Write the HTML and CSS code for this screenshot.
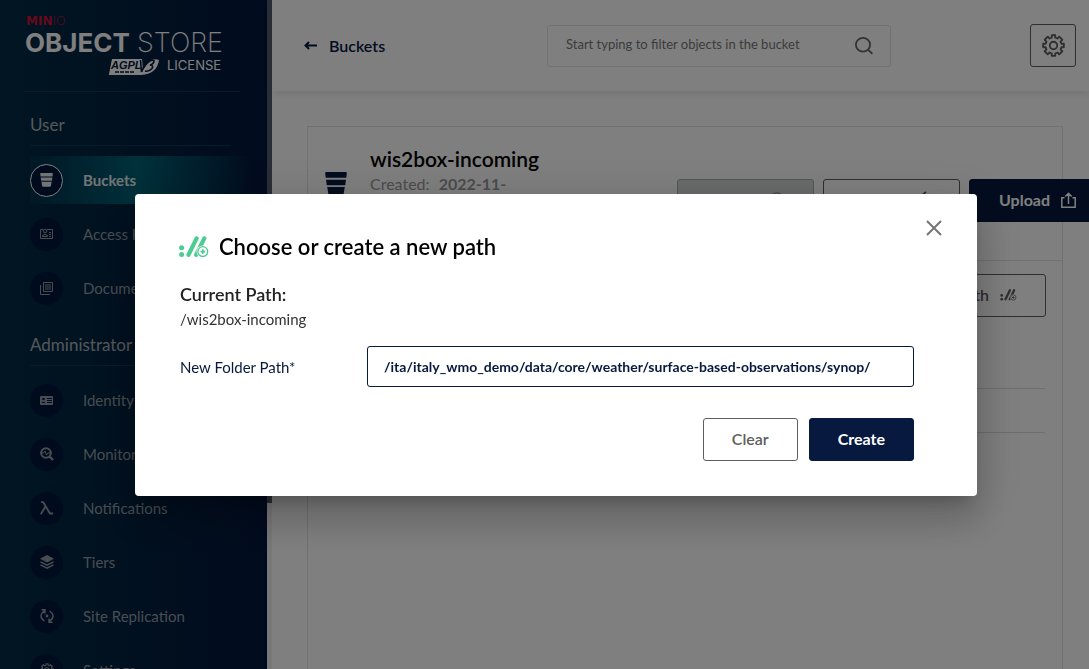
FILE: index.html
```html
<!DOCTYPE html>
<html lang="en">
<head>
<meta charset="utf-8">
<title>MinIO Console</title>
<link rel="stylesheet" href="styles.css">
</head>
<body>
<svg class="defs" aria-hidden="true">
  <symbol id="path-icon" viewBox="0 0 30 22">
    <g fill="currentColor"><circle cx="2.6" cy="11.8" r="2.5"/><circle cx="2.6" cy="18.6" r="2.5"/></g>
    <path d="M9.5 18.8 17.6 2.4M17.2 18.8 25.3 2.4" stroke="currentColor" stroke-width="4.2" stroke-linecap="round" fill="none"/>
    <circle class="badge" cx="23.8" cy="15.6" r="6.2"/>
    <circle cx="23.8" cy="15.6" r="4.9" fill="none" stroke="currentColor" stroke-width="1.3"/>
    <path d="M23.8 13.3v4.6M21.5 15.6h4.6" stroke="currentColor" stroke-width="1.6"/>
  </symbol>
  <symbol id="bucket-icon" viewBox="0 0 22 24">
    <path fill="currentColor" d="M1.2 0h19.6q1.2 0 1 1.2L21.300 5.800H.7L.2 1.200Q0 0 1.200 0zM1 7.800h20l-.8 5.400H1.800zM2.200 15h17.600L18.600 22q-.2 1.600-1.600 1.600H5q-1.400 0-1.600-1.600z"/>
  </symbol>
  <symbol id="gear-icon" viewBox="0 0 24 24">
    <path fill="none" stroke="currentColor" stroke-width="1.900" stroke-linejoin="round" d="M10.200 1.200h3.600v2.600q1.300.3 2.300.9l1.900-1.900 3.200 3.200-1.900 1.900q.6 1 .9 2.300h2.600v3.600h-2.600q-.3 1.300-.9 2.300l1.900 1.900-3.200 3.200-1.900-1.900q-1 .6-2.300.9v2.600h-3.600v-2.600q-1.300-.3-2.300-.9L6 21.200 2.800 18l1.900-1.900q-.6-1-.9-2.300H1.200v-3.600h2.600q.3-1.300.9-2.300L2.800 6 6 2.800l1.900 1.900q1-.6 2.300-.9z"/>
    <circle cx="12" cy="12" r="3.900" fill="none" stroke="currentColor" stroke-width="1.900"/>
  </symbol>
</svg>

<div class="app">
  <aside class="sidebar">
    <div class="menu">
      <div class="brand">
        <svg class="logo" viewBox="0 0 200 62" role="img" aria-label="MinIO Object Store, AGPL v3 License">
          <text class="logo-min" x="0" y="11">MIN<tspan class="logo-io">IO</tspan></text>
          <text class="logo-object" x="-1" y="38">OBJECT</text>
          <text class="logo-store" x="111" y="38">STORE</text>
          <path fill="#fff" d="M86 45h30l1 11 6-9q5-3 10-1-2 14-18 15H82.800z"/>
          <text class="logo-agpl" x="85" y="55">AGPL</text>
          <path d="M114.500 46l1 12q3-8 9-11.500M120 49q4-3.500 8-2.500 0 3.500-4 4.500 4 .5 2 3.500-3 3.500-7 2.500" fill="none" stroke="#04193a" stroke-width="1.600"/>
          <path d="M89 58h19" stroke="#04193a" stroke-width="1.400" stroke-dasharray="4 1"/>
          <text class="logo-license" x="141" y="56">LICENSE</text>
        </svg>
      </div>
      <nav>
        <h2>User</h2>
        <ul>
          <li><a class="active" href="#"><span class="dot"><svg width="13" height="14"><use href="#bucket-icon"/></svg></span>Buckets</a></li>
          <li><a href="#"><span class="dot"><svg width="13" height="12" viewBox="0 0 13 12" fill="none" stroke="currentColor"><path d="M3 1.500H.5v9h12v-9H7"/><circle cx="5" cy="3" r="1.800"/><path d="M2.500 8.500q0-2 2.500-2t2.500 2zM9 4.500h2M9 6.500h2M9 8.500h2"/></svg></span>Access Keys</a></li>
          <li><a href="#"><span class="dot"><svg width="13" height="13" viewBox="0 0 13 13" fill="none" stroke="currentColor"><path d="M3.500.5h9v9h-9zM.5 3v9.500H10M5 3h6M5 5h6M5 7h6"/></svg></span>Documentation</a></li>
        </ul>
        <h2>Administrator</h2>
        <ul>
          <li><a href="#"><span class="dot"><svg width="13" height="9" viewBox="0 0 13 9"><rect width="13" height="9" rx="1" fill="currentColor"/><g class="cut"><circle cx="3.500" cy="3" r="1.300"/><path d="M1.500 7q2-2.500 4 0zM7 2h5v1H7zM7 4h5v1H7zM7 6h5v1H7z"/></g></svg></span>Identity</a></li>
          <li><a href="#"><span class="dot"><svg width="14" height="14" viewBox="0 0 14 14" fill="none" stroke="currentColor"><circle cx="6" cy="6" r="4.800" stroke-width="2"/><path d="M9.500 9.500 13 13" stroke-width="2.400"/><path d="M0 6h3.500L5 4l1.500 4L8 6h4"/></svg></span>Monitoring</a></li>
          <li><a href="#"><span class="dot"><svg width="13" height="14" viewBox="0 0 13 14" fill="none" stroke="currentColor" stroke-width="1.800"><path d="M1 1.200h2.200L10 12.500h3M5.500 5.500.8 13.200"/></svg></span>Notifications</a></li>
          <li><a href="#"><span class="dot"><svg width="14" height="14" viewBox="0 0 14 14"><path fill="currentColor" d="M7 0l7 3.700-7 3.700-7-3.700z"/><path d="M.5 6.800 7 10.200l6.500-3.400M.5 9.800 7 13.200l6.500-3.400" fill="none" stroke="currentColor" stroke-width="1.400"/></svg></span>Tiers</a></li>
          <li><a href="#"><span class="dot"><svg width="14" height="14" viewBox="0 0 14 14" fill="none" stroke="currentColor" stroke-width="1.400"><path d="M4.500 12Q1 10 1 7t3.500-5.200M1.500.8h3.500v3.700M9.500 2Q13 4 13 7t-3.500 5.200M12.500 13.200H9V9.500"/><circle cx="7" cy="7" r=".7"/></svg></span>Site Replication</a></li>
          <li><a href="#"><span class="dot"><svg width="14" height="14"><use href="#gear-icon"/></svg></span>Settings</a></li>
        </ul>
      </nav>
    </div>
    <div class="scroll"><div class="thumb"></div></div>
  </aside>

  <main>
    <header class="topbar">
      <a class="back" href="#"><svg width="13" height="9" viewBox="0 0 13 9"><path d="M13 4.500H2M5 1 1.500 4.500 5 8" fill="none" stroke="currentColor" stroke-width="2"/></svg>Buckets</a>
      <label class="search">
        <input type="text" aria-label="Filter objects" placeholder="Start typing to filter objects in the bucket">
        <svg width="18" height="18" viewBox="0 0 18 18" fill="none" stroke="currentColor" stroke-width="1.800"><ellipse cx="8" cy="7.800" rx="7.100" ry="6.900"/><path d="M12.800 12.500 17.400 16.800"/></svg>
      </label>
      <button class="btn gear" type="button" aria-label="Settings"><svg width="23" height="23"><use href="#gear-icon"/></svg></button>
    </header>

    <section class="browser">
      <div class="heading">
        <svg class="bucket" width="22" height="24"><use href="#bucket-icon"/></svg>
        <div class="info">
          <h1>wis2box-incoming</h1>
          <p>Created: <b>2022-11-07</b></p>
        </div>
        <div class="actions">
          <button class="btn off" type="button" disabled>Rewind <svg width="16" height="16" viewBox="0 0 16 16" fill="none" stroke="currentColor" stroke-width="1.600"><circle cx="8" cy="8" r="7"/></svg></button>
          <button class="btn" type="button">Refresh <svg width="16" height="18" viewBox="0 0 16 18" fill="none" stroke="currentColor" stroke-width="1.600"><path d="M10 1 6 4l4 3M7 4a6 6 0 1 0 7 6"/></svg></button>
          <button class="btn primary" type="button">Upload <svg width="15" height="16" viewBox="0 0 15 16" fill="none" stroke="currentColor" stroke-width="1.500"><path d="M3.500 5.700H.8v9.500h13.400V5.700h-2.700M7.500 12V1.500M4.300 4.500l3.200-3.200 3.200 3.200"/></svg></button>
        </div>
      </div>
      <div class="pathbar">
        <button class="btn" type="button">Create new path <svg width="17" height="12"><use href="#path-icon"/></svg></button>
      </div>
      <div class="rows"><div></div><div></div></div>
    </section>
  </main>
</div>

<div class="backdrop">
  <form class="dialog" role="dialog" aria-labelledby="dialog-title">
    <button class="close" type="button" aria-label="Close"><svg width="16" height="16" viewBox="0 0 16 16"><path d="M1 1l14 14M15 1 1 15" stroke="currentColor" stroke-width="2"/></svg></button>
    <h2 id="dialog-title"><svg width="30" height="22"><use href="#path-icon"/></svg>Choose or create a new path</h2>
    <h3>Current Path:</h3>
    <p>/wis2box-incoming</p>
    <div class="field">
      <label for="folder">New Folder Path*</label>
      <input id="folder" type="text" value="/ita/italy_wmo_demo/data/core/weather/surface-based-observations/synop/">
    </div>
    <div class="buttons">
      <button class="btn" type="button">Clear</button>
      <button class="btn primary" type="button">Create</button>
    </div>
  </form>
</div>
</body>
</html>
```
FILE: styles.css
```css
* { box-sizing: border-box; }
body {
  margin: 0;
  height: 100vh;
  overflow: hidden;
  background: #fff;
  color: #000;
  font: 15px/20px Lato, sans-serif;
}
h1, h2, h3, p, ul { margin: 0; padding: 0; }
ul { list-style: none; }
a { color: inherit; text-decoration: none; }
svg { flex: none; }
button, input { font-family: inherit; }
.defs { position: absolute; width: 0; height: 0; }
.badge { fill: #fff; }

.app { display: flex; height: 100vh; overflow: hidden; }

/* Sidebar */
.sidebar { display: flex; flex: 0 0 272px; }
.menu {
  flex: 1;
  overflow: hidden;
  background: linear-gradient(90deg, #022b45, #03173c);
  color: #8f9ba5;
}
.scroll { flex: 0 0 5px; background: #f1f1f1; }
.thumb { height: 75.2%; background: #555e6e; }
.brand {
  margin: 0 27px 0 24px;
  padding: 14px 0 15px 2px;
  border-bottom: 1px solid #0f3a56;
}
.logo { display: block; width: 200px; height: 62px; overflow: visible; }
.logo text { font-family: Inter, sans-serif; fill: #fff; }
.logo .logo-min { font: bold 12px "DejaVu Sans", sans-serif; fill: #d0103a; }
.logo .logo-io { font-family: "DejaVu Sans", sans-serif; font-weight: 200; fill: #d0103a; }
.logo .logo-object { font-size: 26px; font-weight: 700; }
.logo .logo-store { font-size: 27px; font-weight: 200; }
.logo .logo-license { font-size: 13px; }
.logo .logo-agpl { font: italic bold 11px "Liberation Sans", sans-serif; fill: #04193a; }
.menu h2 {
  margin: 21px 36px 11px 30px;
  padding-bottom: 8px;
  border-bottom: 1px solid #0f3a56;
  font-size: 17px;
  font-weight: 400;
  line-height: 24px;
  color: #a6b0b8;
}
.menu ul { margin-top: -1px; }
.menu li { margin-bottom: 6px; }
.menu li a {
  display: flex;
  align-items: center;
  gap: 20px;
  height: 48px;
  margin-left: 30px;
}
.menu li a.active {
  background: linear-gradient(90deg, rgba(0, 110, 128, .1), #006377 45%, rgba(0, 99, 119, 0) 94%);
  color: #e4eaec;
  font-weight: 700;
}
.dot {
  display: flex;
  align-items: center;
  justify-content: center;
  width: 33px;
  height: 33px;
  border-radius: 50%;
  background: #01173b;
}
.cut { fill: #01173b; }
.active .dot { border: 1px solid #fff; }

/* Top bar */
main { flex: 1; min-width: 0; }
.topbar {
  display: flex;
  align-items: center;
  height: 91px;
  padding: 0 13px 0 32px;
  box-shadow: 0 3px 8px rgba(0, 0, 0, .1);
}
.back {
  display: flex;
  flex: 1 1 0;
  align-items: center;
  gap: 12px;
  color: #07193e;
  font-size: 16px;
  font-weight: 600;
}
.search {
  display: flex;
  flex: 0 1 344px;
  align-items: center;
  height: 42px;
  margin-right: 139px;
  padding: 0 17px;
  border: 1px solid #e2e2e2;
  border-radius: 3px;
  color: #666;
}
.search input {
  flex: 1;
  min-width: 0;
  padding: 0 1px 3px;
  border: 0;
  background: none;
  font-size: 13px;
  color: #666;
}
.search input::placeholder { color: #777; opacity: 1; }

.btn {
  display: inline-flex;
  flex: none;
  align-items: center;
  justify-content: center;
  gap: 11px;
  height: 43px;
  padding: 0 28px 2px;
  border: 1px solid #5e5e5e;
  border-radius: 3px;
  background: #fff;
  color: #5e5e5e;
  font-size: 16px;
  font-weight: 600;
  white-space: nowrap;
}
.btn.primary { border-color: #07193e; background: #07193e; color: #fff; font-weight: 700; }
.btn.off { border-color: #aaafaf; background: #d3d7d7; color: #999; }
.btn.gear { width: 46px; padding: 0; }

/* Object browser */
.browser {
  height: 100vh;
  margin: 35px 26px 0 35px;
  border: 1px solid #e2e2e2;
}
.heading {
  display: flex;
  height: 134px;
  padding: 19px 0 0 17px;
  border-bottom: 1px solid #e2e2e2;
}
.bucket { margin: 26px 23px 0 0; color: #07193e; }
.info { flex: 0 0 307px; }
.info h1 { font-size: 21px; font-weight: 600; line-height: 26px; }
.info p { width: 150px; font-size: 16px; line-height: 24px; color: #999; }
.info b { margin-left: 5px; }
.actions { display: flex; gap: 9px; margin-top: 33px; }
.actions .btn { width: 137px; padding: 0 24px 2px; }
.pathbar { display: flex; justify-content: flex-end; padding: 13px 16px 28px; }
.pathbar .badge { fill: none; }
.rows { padding: 0 17px; }
.rows div { height: 44px; border-bottom: 1px solid #dcdcdc; }

/* Dialog */
.backdrop {
  position: fixed;
  inset: 0;
  display: flex;
  align-items: center;
  justify-content: center;
  padding: 21px 0 0 23px;
  background: rgba(0, 0, 0, .5);
}
.dialog {
  position: relative;
  width: 842px;
  max-width: 90%;
  padding: 40px 63px 35px 45px;
  border-radius: 4px;
  background: #fff;
  box-shadow: 0 11px 15px -7px rgba(0, 0, 0, .2), 0 24px 38px 3px rgba(0, 0, 0, .14), 0 9px 46px 8px rgba(0, 0, 0, .12);
}
.close {
  position: absolute;
  top: 26px;
  right: 35px;
  display: flex;
  padding: 0;
  border: 0;
  background: none;
  color: #757575;
}
.dialog h2 {
  display: flex;
  align-items: center;
  gap: 10px;
  font-size: 22px;
  font-weight: 600;
  line-height: 26px;
}
.dialog h2 svg { margin-left: -1px; color: #4ccb92; }
.dialog h3 { margin-top: 21px; font-size: 18px; font-weight: 600; line-height: 26px; color: #222; }
.dialog p { line-height: 24px; color: #333; }
.field { display: flex; align-items: center; margin-top: 15px; color: #07193e; }
.field label { flex: 0 0 187px; }
.field input {
  flex: 1;
  min-width: 0;
  height: 41px;
  padding: 0 16px;
  border: 1px solid #07193e;
  border-radius: 3px;
  color: #07193e;
  font-size: 14px;
  font-weight: 700;
}
.buttons { display: flex; justify-content: flex-end; gap: 11px; margin-top: 31px; }
```
